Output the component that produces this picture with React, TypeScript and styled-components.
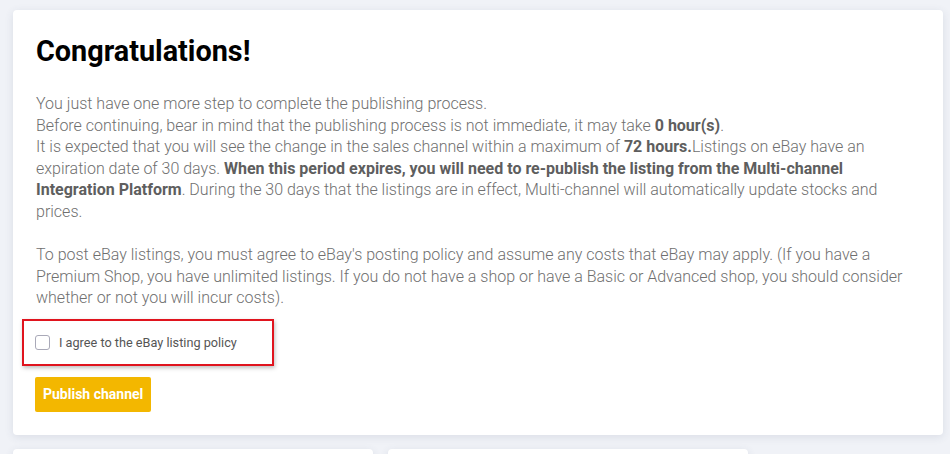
import React from "react";
import styled, { createGlobalStyle } from "styled-components";

const Global = createGlobalStyle`
  html, body { margin: 0; padding: 0; background: #f0f2f7; }
  body { font-family: Roboto, "Liberation Sans", Arial, sans-serif; }
  * { box-sizing: border-box; }
`;

const Page = styled.div`
  padding: 10px 7px 0 13px;
  display: flex;
  flex-direction: column;
  gap: 14px;
  height: 454px;
  overflow: hidden;
`;

const Card = styled.section`
  background: #fff;
  border-radius: 4px;
  box-shadow: 0 2px 8px rgba(60, 70, 110, 0.12);
  padding: 24px 23px 23px 23px;
`;

const Title = styled.h1`
  margin: 0 0 25px 0;
  font-size: 28.8px;
  line-height: 34px;
  font-weight: 700;
  color: #000;
`;

const Text = styled.p`
  margin: 0;
  font-size: 16px;
  line-height: 21.6px;
  font-weight: 300;
  color: #6f6f6f;
  & + & { margin-top: 21.6px; }
  b { font-weight: 700; color: #5e5e5e; }
`;

const AgreeBox = styled.label`
  margin-top: 10px;
  margin-left: -14px;
  width: 252px;
  height: 47px;
  border: 2px solid #e0141e;
  box-shadow: 1px 2px 4px rgba(0, 0, 0, 0.25);
  display: flex;
  align-items: center;
  gap: 9px;
  padding-left: 11px;
  font-size: 12.7px;
  color: #555;
  cursor: pointer;
`;

const Check = styled.span`
  width: 15px;
  height: 15px;
  border: 1px solid #a9a9b8;
  border-radius: 3px;
  background: #fff;
  flex: none;
`;

const Button = styled.button`
  margin-top: 11px;
  margin-left: -1px;
  align-self: flex-start;
  background: #f3b700;
  color: #fff;
  border: none;
  border-radius: 2px;
  font-family: Roboto, "Liberation Sans", Arial, sans-serif;
  font-weight: 700;
  font-size: 14px;
  height: 35px;
  padding: 0 8px;
  cursor: pointer;
`;

const Body = styled.div`
  display: flex;
  flex-direction: column;
`;

const Row = styled.div`
  display: flex;
  gap: 15px;
`;

const SmallCard = styled.div`
  width: 360px;
  height: 40px;
  background: #fff;
  border-radius: 4px;
  box-shadow: 0 2px 8px rgba(60, 70, 110, 0.12);
`;

export default function App() {
  return (
    <>
      <Global />
      <Page>
        <Card>
          <Title>Congratulations!</Title>
          <Body>
            <Text>
              You just have one more step to complete the publishing process.
              <br />
              Before continuing, bear in mind that the publishing process is not immediate, it may take <b>0 hour(s)</b>.
              <br />
              It is expected that you will see the change in the sales channel within a maximum of <b>72 hours.</b>Listings on eBay have an expiration date of 30 days. <b>When this period expires, you will need to re-publish the listing from the Multi-channel Integration Platform</b>. During the 30 days that the listings are in effect, Multi-channel will automatically update stocks and prices.
            </Text>
            <Text>
              To post eBay listings, you must agree to eBay's posting policy and assume any costs that eBay may apply. (If you have a Premium Shop, you have unlimited listings. If you do not have a shop or have a Basic or Advanced shop, you should consider whether or not you will incur costs).
            </Text>
            <AgreeBox>
              <Check />
              I agree to the eBay listing policy
            </AgreeBox>
            <Button>Publish channel</Button>
          </Body>
        </Card>
        <Row>
          <SmallCard />
          <SmallCard />
        </Row>
      </Page>
    </>
  );
}
